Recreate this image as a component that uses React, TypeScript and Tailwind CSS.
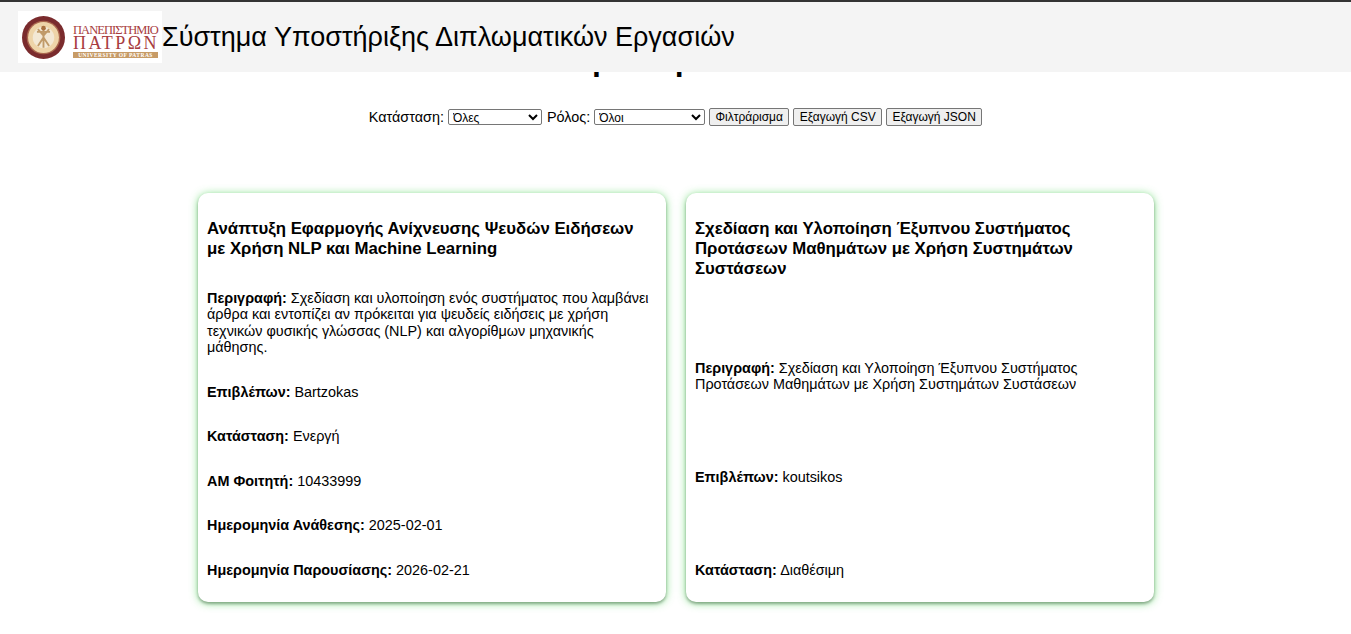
const sans = "font-['Liberation_Sans',Arial,sans-serif]";

function Seal() {
  return (
    <svg width="43" height="43" viewBox="0 0 46 46" className="shrink-0">
      <circle cx="23" cy="23" r="23" fill="#7a2b2d" />
      <circle cx="23" cy="23" r="18" fill="#a9654c" />
      <circle cx="23" cy="23" r="16.5" fill="#eed4a8" />
      <circle cx="23" cy="23" r="11.5" fill="#f3e8d4" />
      <path d="M23 12v22M16 17h14M17 14l6 7 6-7M17 32l6-9 6 9" stroke="#c09a68" strokeWidth="2" fill="none" />
      <circle cx="23" cy="13" r="2.5" fill="#a9713f" />
    </svg>
  );
}

function Logo() {
  return (
    <div className="w-[144px] h-[52px] bg-white flex items-center pl-[4px] shrink-0">
      <Seal />
      <div className="ml-[8px] w-[85px] pt-[9px] flex flex-col font-['Liberation_Serif',serif] text-[#a83c40]">
        <div className="text-[12.5px] leading-[11px] whitespace-nowrap tracking-[-0.95px]">ΠΑΝΕΠΙΣΤΗΜΙΟ</div>
        <div className="text-[18px] leading-[15px] whitespace-nowrap tracking-[2.4px]">ΠΑΤΡΩΝ</div>
        <div className="mt-[1px] h-[6px] bg-[#c79b66] text-white text-[5.5px] leading-[6px] font-bold whitespace-nowrap text-center tracking-[0.45px]">UNIVERSITY OF PATRAS</div>
      </div>
    </div>
  );
}

function Row({ label, value }: { label: string; value: string }) {
  return (
    <p className="my-[14.2px] text-[14.4px] leading-[16.25px]">
      <strong className="font-bold">{label}</strong> {value}
    </p>
  );
}

function Card({ title, titleGap, rows }: { title: string; titleGap: string; rows: [string, string][] }) {
  return (
    <div className="h-[409px] rounded-[10px] bg-white pt-[10px] pb-[9.5px] pl-[9.5px] pr-[10px] flex flex-col justify-between shadow-[0_2px_3px_rgba(0,0,0,0.28),0_1px_8px_rgba(70,210,80,0.7)]">
      <h3 className={`mt-[16px] ${titleGap} text-[16.8px] leading-[20px] font-bold`}>{title}</h3>
      {rows.map(([l, v]) => (
        <Row key={l} label={l} value={v} />
      ))}
    </div>
  );
}

const control = "bg-white border border-[#767676] rounded-[2px] text-[12px] leading-[14px]";
const btn = "ml-[4px] h-[18px] bg-[#efefef] border border-[#767676] rounded-[2px] text-[12px] leading-[14px]";

export default function App() {
  return (
    <div className={`relative h-[634px] overflow-hidden bg-white text-black ${sans}`}>
      <header className="absolute inset-x-0 top-0 h-[72px] border-t-2 border-[#333333] bg-[#f4f4f4] flex items-center pl-[18px] z-10">
        <Logo />
        <span className="text-[27px] leading-[31px] whitespace-nowrap">Σύστημα Υποστήριξης Διπλωματικών Εργασιών</span>
      </header>

      <main className="pt-[42px]">
        <h1 className="pr-[43px] text-center text-[30px] leading-[37px] font-bold">Προσωρινά</h1>

        <div className="mt-[29px] h-[18px] flex items-center justify-center text-[14.4px] leading-[16px]">
          <label htmlFor="state">Κατάσταση:</label>
          <select id="state" className={`ml-[4px] w-[94px] h-[16px] ${control}`}>
            <option>Όλες</option>
          </select>
          <label htmlFor="role" className="ml-[5px]">Ρόλος:</label>
          <select id="role" className={`ml-[4px] w-[111px] h-[16px] ${control}`}>
            <option>Όλοι</option>
          </select>
          <button className={`${btn} w-[80px]`}>Φιλτράρισμα</button>
          <button className={`${btn} w-[89px]`}>Εξαγωγή CSV</button>
          <button className={`${btn} w-[96px]`}>Εξαγωγή JSON</button>
        </div>

        <div className="mt-[67px] mx-auto w-[956px] grid grid-cols-2 gap-[20px]">
          <Card
            title="Ανάπτυξη Εφαρμογής Ανίχνευσης Ψευδών Ειδήσεων με Χρήση NLP και Machine Learning"
            titleGap="mb-[17px]"
            rows={[
              ["Περιγραφή:", "Σχεδίαση και υλοποίηση ενός συστήματος που λαμβάνει άρθρα και εντοπίζει αν πρόκειται για ψευδείς ειδήσεις με χρήση τεχνικών φυσικής γλώσσας (NLP) και αλγορίθμων μηχανικής μάθησης."],
              ["Επιβλέπων:", "Bartzokas"],
              ["Κατάσταση:", "Ενεργή"],
              ["ΑΜ Φοιτητή:", "10433999"],
              ["Ημερομηνία Ανάθεσης:", "2025-02-01"],
              ["Ημερομηνία Παρουσίασης:", "2026-02-21"],
            ]}
          />
          <Card
            title="Σχεδίαση και Υλοποίηση Έξυπνου Συστήματος Προτάσεων Μαθημάτων με Χρήση Συστημάτων Συστάσεων"
            titleGap="mb-[18px]"
            rows={[
              ["Περιγραφή:", "Σχεδίαση και Υλοποίηση Έξυπνου Συστήματος Προτάσεων Μαθημάτων με Χρήση Συστημάτων Συστάσεων"],
              ["Επιβλέπων:", "koutsikos"],
              ["Κατάσταση:", "Διαθέσιμη"],
            ]}
          />
        </div>
      </main>
    </div>
  );
}
